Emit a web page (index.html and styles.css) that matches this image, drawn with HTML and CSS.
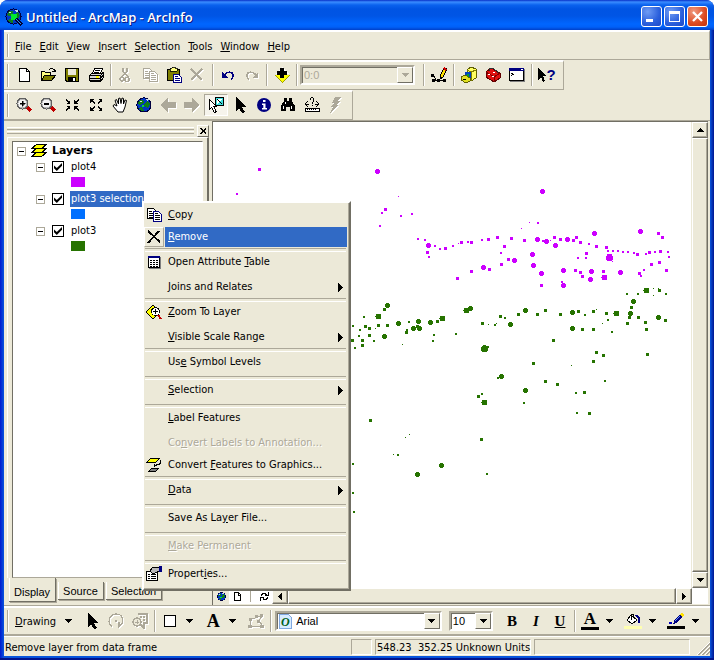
FILE: index.html
```html
<!DOCTYPE html>
<html lang="en">
<head>
<meta charset="utf-8">
<title>Untitled - ArcMap - ArcInfo</title>
<link rel="stylesheet" href="styles.css">
</head>
<body>
<svg class="defs" aria-hidden="true">
  <symbol id="globe" viewBox="0 0 16 16">
    <circle cx="8" cy="8" r="7.6" fill="#000040"/>
    <circle cx="8" cy="8" r="6.6" fill="#0038c8"/>
    <path d="M4 3h3l1 2-2 2-3 1-1-2zM9 6l3-2 2 3-2 4-3-1-1-2zM4 10l3 1 1 3-2 0-3-2z" fill="#108018"/>
    <path d="M9 2h3l1 1-2 1zM4 4h2v1H4z" fill="#c8d8e8"/>
    <path d="M6 8h2v2H6z" fill="#00e040"/>
  </symbol>
  <symbol id="pointer" viewBox="0 0 16 16"><path d="M4 0v14l3-3 3 5 3-1-3-5h4z"/></symbol>
  <symbol id="down" viewBox="0 0 7 4"><path d="M0 0h7v1H6v1H5v1H4v1H3V3H2V2H1V1H0z"/></symbol>
  <symbol id="copy" viewBox="0 0 16 16">
    <path d="M1 1h6l2 2v8H1z" fill="#fff" stroke="currentColor" transform="translate(.5 .5)"/>
    <path d="M3 4h3M3 6h5M3 8h5M3 10h4" stroke="currentColor" transform="translate(0 .5)"/>
    <path d="M7 5h5l3 3v7H7z" fill="#fff" stroke="var(--front, currentColor)" transform="translate(.5 -.5)"/>
    <path d="M9 7h3M9 9h5M9 11h5M9 13h5" stroke="currentColor" transform="translate(0 -.5)"/>
  </symbol>
  <symbol id="lens" viewBox="0 0 16 16">
    <path d="M11 10l4 4" stroke="#c00000" stroke-width="3"/>
    <circle cx="6.5" cy="6.5" r="5.5" fill="#b8b8b8" stroke="#606060"/>
    <circle cx="6.5" cy="6.5" r="4" fill="#f4f4f4"/>
  </symbol>
</svg>

<div class="window">
  <header class="title">
    <svg class="app" viewBox="0 0 18 18"><use href="#globe" width="17" height="17"/><circle cx="9" cy="9" r="3.5" fill="#00e830"/><path d="M11 11l6 6" stroke="#000030" stroke-width="3"/><path d="M11 11l5 5" stroke="#3090f0"/></svg>
    <h1>Untitled - ArcMap - ArcInfo</h1>
    <button class="cap" aria-label="Minimize"><svg viewBox="0 0 19 19"><path d="M4 12h7v3H4z" fill="#fff"/></svg></button>
    <button class="cap" aria-label="Maximize"><svg viewBox="0 0 19 19"><path d="M4 4h11v11H4zM5 7v7h9V7z" fill="#fff" fill-rule="evenodd"/></svg></button>
    <button class="cap close" aria-label="Close"><svg class="smooth" viewBox="0 0 19 19"><path d="M5 5l9 9M14 5l-9 9" stroke="#fff" stroke-width="2.3"/></svg></button>
  </header>

  <div class="client">
    <nav class="bar menubar">
      <button><u>F</u>ile</button><button><u>E</u>dit</button><button><u>V</u>iew</button><button><u>I</u>nsert</button><button><u>S</u>election</button><button><u>T</u>ools</button><button><u>W</u>indow</button><button><u>H</u>elp</button>
    </nav>

    <div class="bar tools fit">
      <button aria-label="New"><svg viewBox="0 0 16 16"><path d="M3.500 1.500h7l3 3v10h-10z" fill="#fff" stroke="#000"/><path d="M10.500 1.500v3h3" fill="none" stroke="#000"/></svg></button>
      <button aria-label="Open"><svg viewBox="0 0 16 16"><path d="M1.500 13.500v-9h3l1 1h5v3" fill="#ffff80" stroke="#000"/><path d="M1.500 13.500l3-5h11l-4 5z" fill="#808000" stroke="#000"/><path d="M9 2.500h1m0-1h3m0 1h1v2m1-2v2h-3" fill="none" stroke="#000"/></svg></button>
      <button aria-label="Save"><svg viewBox="0 0 16 16"><path d="M1 1h14v14H2l-1-1z"/><path d="M2 2h2v6h8V2h2v12H3l-1-1z" fill="#808000"/><path d="M4 2h8v6H4z" fill="#ece9d8"/><path d="M4 10h8v5H4z"/><path d="M9 11h2v3H9z" fill="#fff"/></svg></button>
      <button aria-label="Print"><svg viewBox="0 0 16 16"><path d="M4.500 6.500l2-5h8l-2 5" fill="#fff" stroke="#000"/><path d="M7 3.500h5M6 5.500h5" stroke="#000"/><path d="M1.500 8.500l2-2h10l2-1v5l-3 4h-10l-1-2z" fill="#d8d8d8" stroke="#000"/><path d="M2 8.500h10l3-2M2 11.500h10l3-3M12.500 8v6M3 13.500h9" fill="none" stroke="#000"/><path d="M8 9h3v2H8z" fill="#ffff00"/></svg></button>
      <i class="sep"></i>
      <button class="off" aria-label="Cut"><svg viewBox="0 0 16 16"><path d="M5 1v3l5 6M9 1v3l-5 6" fill="none" stroke="currentColor" stroke-width="1.500"/><circle cx="4" cy="12" r="2" fill="none" stroke="currentColor" stroke-width="1.500"/><circle cx="9" cy="12.500" r="2" fill="none" stroke="currentColor" stroke-width="1.500"/></svg></button>
      <button class="off" aria-label="Copy"><svg viewBox="0 0 16 16"><use href="#copy"/></svg></button>
      <button aria-label="Paste"><svg viewBox="0 0 16 16"><path d="M1.500 2.500h12v11h-12z" fill="#808000" stroke="#000"/><path d="M4 1h2V0h3v1h2v3H4z" fill="#ffff80" stroke="#000" stroke-width=".8"/><path d="M7.500 7.500h5l3 3v5h-8z" fill="#fff" stroke="#000080"/><path d="M9 9.500h3M9 11.500h5M9 13.500h5" stroke="#000080"/></svg></button>
      <button class="off" aria-label="Delete"><svg viewBox="0 0 16 16"><path d="M1 2l11 11M12 2L1 13" stroke="currentColor" stroke-width="1.800"/></svg></button>
      <i class="sep"></i>
      <button aria-label="Undo"><svg viewBox="0 0 16 16"><path d="M2 5v6h6z" fill="#000080"/><path d="M4 8c3-4 9-4 9 1 0 2-1 3-2 4" fill="none" stroke="#000080" stroke-width="1.500"/></svg></button>
      <button class="off" aria-label="Redo"><svg viewBox="0 0 16 16"><path d="M14 5v6H8z" fill="currentColor"/><path d="M12 8c-3-4-9-4-9 1 0 2 1 3 2 4" fill="none" stroke="currentColor" stroke-width="1.500"/></svg></button>
      <i class="sep"></i>
      <button aria-label="Add Data"><svg viewBox="0 0 16 16"><path d="M0 8h16l-8 8z" fill="#a0a000"/><path d="M1 8h14l-7 7z" fill="#ffff00"/><path d="M8 0L1 7h14z" fill="#fff"/><path d="M6 1h4v3h3v4h-3v3H6V8H3V4h3z"/></svg></button>
      <i class="sep"></i>
      <span class="combo scale"><select aria-label="Map scale" disabled><option>0:0</option></select><span class="drop"><svg viewBox="0 0 7 4"><use href="#down"/></svg></span></span>
      <i class="sep"></i>
      <button aria-label="Editor"><svg viewBox="0 0 16 16"><path d="M2 7l3 6h9M1 13h14" fill="none" stroke="#000"/><path d="M0 7h3v3H0zM1 12h3v3H1zM6 12h3v3H6zM12 12h3v3h-3z"/><path d="M9 9l4-8 3 1-4 8-3 2z" fill="#ffe000" stroke="#000"/><path d="M13 0l3 2-1 2-3-2z" fill="#d00000"/></svg></button>
      <i class="sep"></i>
      <button aria-label="ArcCatalog"><svg viewBox="0 0 16 16"><path d="M6 3l4-3 5 2v9l-5 3-4-4z" fill="#ffff60" stroke="#606000"/><path d="M10 5v9M6 3l4 2 5-2" fill="none" stroke="#808000"/><circle cx="7" cy="8" r="3.500" fill="#0040c0"/><path d="M6 7h2v3H6z" fill="#00a030"/><path d="M0 10l4-2 5 3v3l-4 2-5-3z" fill="#e0e020" stroke="#606000"/><path d="M2 12h3" stroke="#000"/></svg></button>
      <button aria-label="ArcToolbox"><svg viewBox="0 0 16 16"><path d="M1 5l5-4 9 5v5l-6 4-8-5z" fill="#e01010" stroke="#600000"/><path d="M1 5l8 5 6-4M9 10v5" fill="none" stroke="#800000"/><path d="M4 4V2l3-1 5 3v2" fill="none" stroke="#303030"/><path d="M3 7h2v1H3zM7 9h2v1H7zM8 5h2v1H8z" fill="#fff"/></svg></button>
      <button aria-label="Command Line"><svg viewBox="0 0 16 16"><path d="M1 2h15v13H1z" fill="#808080"/><path d="M0 1h15v13H0z"/><path d="M1 4h13v9H1z" fill="#fff"/><path d="M0 1h15v3H0z" fill="#000080"/><path d="M12 2h2v1h-2z" fill="#fff"/><path d="M2 6l2 1.500L2 9" fill="none" stroke="#000"/></svg></button>
      <i class="sep"></i>
      <button class="help" aria-label="What's This"><svg viewBox="0 0 8 16"><path d="M0 1v12l3-3 2 5 2-1-2-5h3z"/></svg><b>?</b></button>
    </div>

    <div class="bar tools fit short">
      <button aria-label="Zoom In"><svg viewBox="0 0 16 16"><use href="#lens"/><path d="M4 6h2V4h1v2h2v1H7v2H6V7H4z" stroke="#000" stroke-width=".5"/></svg></button>
      <button aria-label="Zoom Out"><svg viewBox="0 0 16 16"><use href="#lens"/><path d="M4 6h5v1.500H4z"/></svg></button>
      <button aria-label="Fixed Zoom In"><svg viewBox="0 0 16 16"><path d="M6 3v4H2l1.500-1.500L1 3l1-1 2.500 2.500zM10 3v4h4l-1.500-1.500L15 3l-1-1-2.500 2.500zM6 13V9H2l1.500 1.500L1 13l1 1 2.500-2.500zM10 13V9h4l-1.500 1.500L15 13l-1 1-2.500-2.500z"/></svg></button>
      <button aria-label="Fixed Zoom Out"><svg viewBox="0 0 16 16"><path d="M2 2h4L4.500 3.500 7 6 6 7 3.500 4.500 2 6zM14 2h-4l1.500 1.500L9 6l1 1 2.500-2.500L14 6zM2 14h4l-1.500-1.500L7 10 6 9l-2.500 2.500L2 10zM14 14h-4l1.500-1.500L9 10l1-1 2.500 2.500L14 10z"/></svg></button>
      <button aria-label="Pan"><svg class="smooth" viewBox="0 0 16 16"><path d="M5 9L3 3.500l1.500-1L6.500 7V1.500L8 1l1 5.500L10 1l1.500.500V7L13 3l1.500.5L13 10l-2 5H6l-5-6 1-1.500z" fill="#fff" stroke="#000"/></svg></button>
      <button aria-label="Full Extent"><svg viewBox="0 0 16 16"><use href="#globe"/></svg></button>
      <button class="off" aria-label="Previous Extent"><svg viewBox="0 0 16 16"><path d="M0 8l8-7v4h8v6H8v4z" fill="currentColor"/></svg></button>
      <button class="off" aria-label="Next Extent"><svg viewBox="0 0 16 16"><path d="M16 8L8 1v4H0v6h8v4z" fill="currentColor"/></svg></button>
      <button class="on" aria-label="Select Features"><svg viewBox="0 0 16 16"><path d="M7.500.5h8v8h-8z" fill="#40e0e0" stroke="#000"/><path d="M9 2h5l-5 5z" fill="#fff"/><path d="M9 2l5 5" stroke="#000"/><path d="M1.500 2.500v10l2-2 3 5 2-1-3-5h3z" fill="#fff" stroke="#000"/></svg></button>
      <button aria-label="Select Elements"><svg viewBox="0 0 16 16"><use href="#pointer"/></svg></button>
      <button aria-label="Identify"><svg class="smooth" viewBox="0 0 16 16"><circle cx="8" cy="8" r="7" fill="#000080"/><path d="M7 3h2.500v2H7zM6 6.500h3.500V11H11v1.500H6V11h1.300V8H6z" fill="#fff"/></svg></button>
      <button aria-label="Find"><svg viewBox="0 0 16 16"><path d="M4 1h3v3h2V1h3v3l3 5v5h-5v-4H6v4H1V9l3-5z"/><path d="M3.500 9v3M11.500 9v3M5.500 5v2" stroke="#fff"/></svg></button>
      <button aria-label="Measure"><svg viewBox="0 0 16 16"><path d="M4 4L1 7l3 3M1 7h4M12 4l3 3-3 3M15 7h-4M6 3c0-3 4-3 4 0 0 2-2 2-2 4M8 8v1" fill="none" stroke="#000"/><path d="M1 11.500h14v3H1z" fill="#fff" stroke="#000"/><path d="M3.500 12v1M5.500 12v1M7.500 12v1M9.500 12v1M11.500 12v1" stroke="#000"/></svg></button>
      <button class="off" aria-label="Hyperlink"><svg viewBox="0 0 16 16"><path d="M7 0h6l-3 4h2l-4 4h2l-8 8 3-6H3l3-4H4z" fill="currentColor"/></svg></button>
    </div>

    <main class="work">
      <aside class="dock">
        <div class="grip"><span class="rails"></span><button aria-label="Close panel"><svg viewBox="0 0 8 7"><path d="M0 0h2l2 2 2-2h2L5 3.500 8 7H6L4 5 2 7H0l3-3.500z"/></svg></button></div>
        <div class="frame">
          <ul class="tree">
            <li class="root"><button class="fold" aria-label="Collapse Layers"></button><svg class="stack" viewBox="0 0 16 14"><path d="M5.500 8.500h10l-5 4H.5z" fill="#ffff00" stroke="#000"/><path d="M5.500 4.500h10l-5 4H.5z" fill="#ffff00" stroke="#000"/><path d="M5.500.5h10l-5 4H.5z" fill="#ffff00" stroke="#000"/></svg><b>Layers</b></li>
            <li><button class="fold" aria-label="Collapse plot4"></button><label><input type="checkbox" checked><span>plot4</span></label></li>
            <li class="key violet"></li>
            <li><button class="fold" aria-label="Collapse plot3 selection"></button><label><input type="checkbox" checked><span class="picked">plot3 selection</span></label></li>
            <li class="key blue"></li>
            <li><button class="fold" aria-label="Collapse plot3"></button><label><input type="checkbox" checked><span>plot3</span></label></li>
            <li class="key green"></li>
          </ul>
        </div>
        <div class="tabs"><button class="front">Display</button><button>Source</button><button>Selection</button></div>
      </aside>

      <section class="view">
        <div class="map">
          <svg class="points" aria-label="Map">
            <g class="sites" transform="translate(-212.500 -121.500)">
              <g class="p4">
                <path class="s1" d="M458 243h0M529 222h0M521 228h0M550 240h0M612 261h0M398 196h0"/>
                <path class="s2" d="M236 193h0M381 212h0M400 215h0M411 213h0M379 225h0M417 238h0M424 239h0M434 245h0M439 248h0M452 245h0M467 241h0M481 239h0M500 252h0M428 256h0M537 222h0M542 240h0M588 243h0M607 250h0M612 250h0M617 250h0M622 251h0M627 251h0M633 252h0M645 253h0M654 251h0M667 251h0M668 256h0M585 257h0M577 257h0M640 275h0M643 269h0M561 281h0"/>
                <path class="s3" d="M259 169h0M385 209h0M445 248h0M461 242h0M471 242h0M488 239h0M497 237h0M504 246h0M511 238h0M427 252h0M508 259h0M501 264h0M489 269h0M471 271h0M457 278h0M524 240h0M554 237h0M560 239h0M573 240h0M576 237h0M580 242h0M596 246h0M606 247h0M637 254h0M649 252h0M660 251h0M658 233h0M662 237h0M586 253h0M575 270h0M580 272h0M582 276h0M603 271h0M639 273h0M651 264h0M659 262h0M666 270h0M541 285h0"/>
                <path class="s4" d="M377 171h0M428 245h0M514 260h0M483 267h0M537 239h0M532 254h0M533 265h0M542 191h0M546 241h0M555 245h0M567 239h0M594 233h0M640 231h0M563 270h0M591 271h0M590 279h0M620 272h0M541 273h0M563 285h0"/>
                <path class="s5" d="M604 277h0"/><path class="s6" d="M609 257h0"/>
              </g>
              <g class="p3">
                <path class="s1" d="M375 328h0M402 344h0M488 324h0M496 323h0M596 309h0M602 323h0M653 288h0M653 295h0M658 288h0M409 434h0M405 437h0M393 454h0M571 365h0"/>
                <path class="s2" d="M363 316h0M352 325h0M359 329h0M408 321h0M406 329h0M358 335h0M373 340h0M354 347h0M433 334h0M432 340h0M455 333h0M494 324h0M504 317h0M584 314h0M607 319h0M626 293h0M637 293h0M665 293h0M611 331h0M487 346h0M497 377h0M481 393h0M482 400h0M523 402h0M397 454h0M352 463h0M486 473h0M352 492h0M353 511h0M604 380h0M575 392h0M576 412h0"/>
                <path class="s3" d="M384 309h0M365 326h0M369 328h0M378 325h0M387 325h0M417 326h0M406 332h0M437 321h0M369 335h0M362 340h0M352 340h0M362 345h0M482 323h0M500 316h0M518 314h0M537 314h0M545 310h0M560 314h0M578 311h0M593 311h0M606 313h0M631 307h0M629 317h0M627 323h0M638 317h0M645 322h0M646 329h0M665 320h0M659 290h0M582 329h0M593 329h0M553 340h0M478 396h0M481 439h0M533 363h0M370 420h0M596 352h0M603 355h0M593 361h0M647 354h0M545 381h0M557 384h0M584 392h0M589 413h0"/>
                <path class="s4" d="M387 305h0M398 323h0M418 321h0M413 328h0M419 328h0M430 322h0M470 308h0M384 336h0M510 324h0M525 310h0M572 312h0M630 313h0M633 301h0M658 317h0M572 328h0M501 376h0M525 390h0M441 465h0M417 474h0"/>
                <path class="s5" d="M378 316h0M442 318h0M466 310h0M616 313h0M646 290h0M484 402h0"/><path class="s6" d="M484 348h0"/>
              </g>
            </g>
          </svg>
        </div>
        <div class="vscroll"><button aria-label="Scroll up"><svg class="flip" viewBox="0 0 7 4"><use href="#down"/></svg></button><span class="thumb"></span><button aria-label="Scroll down"><svg viewBox="0 0 7 4"><use href="#down"/></svg></button></div>
        <div class="hscroll">
          <button class="mode on" aria-label="Data View"><svg class="mini" viewBox="0 0 16 16"><use href="#globe"/></svg></button>
          <button class="mode" aria-label="Layout View"><svg class="mini" viewBox="0 0 9 9"><path d="M1.500.5h4l2 2v6h-6z" fill="#fff" stroke="#000"/><path d="M5.500 1v2h2" fill="none" stroke="#000"/></svg></button>
          <i></i>
          <button class="mode" aria-label="Refresh"><svg class="mini" viewBox="0 0 9 9"><path d="M1.500 4V2.500h1v-1h3v1h1v1M8.500 0v4M8 3.500H5M7.500 5v1.500h-1v1h-3v-1h-1M.5 9V5M1 5.500h3" fill="none" stroke="#000"/></svg></button>
          <button aria-label="Scroll left"><svg class="side" viewBox="0 0 4 7"><path d="M4 0v7H3V6H2V5H1V4H0V3h1V2h1V1h1V0z"/></svg></button><span class="thumb"></span><button aria-label="Scroll right"><svg class="side" viewBox="0 0 4 7"><path d="M0 0v7h1V6h1V5h1V4h1V3H3V2H2V1H1V0z"/></svg></button>
        </div>
        <span class="corner"></span>
      </section>
    </main>

    <div class="bar tools draw">
      <button class="word"><u>D</u>rawing</button><button class="arrow" aria-label="Drawing menu"><svg viewBox="0 0 7 4"><use href="#down"/></svg></button>
      <button aria-label="Select Elements"><svg viewBox="0 0 16 16"><use href="#pointer"/></svg></button>
      <button class="off" aria-label="Rotate"><svg viewBox="0 0 16 16"><path d="M4 14C-1 10 1 1 8 1c8 0 8 9 4 12M15 10l-4 4v-5" fill="none" stroke="currentColor" stroke-width="1.300"/><path d="M7 7h2v2H7z" fill="currentColor"/></svg></button>
      <button class="off" aria-label="Zoom to Selected"><svg viewBox="0 0 16 16"><path d="M6 1h9v9h-3v5l-3-3" fill="none" stroke="currentColor" stroke-width="1.500"/><path d="M8 3h2v2H8zM11 3h2v2h-2zM11 6h2v2h-2z" fill="currentColor"/><circle cx="5" cy="9" r="4" fill="#ece9d8" stroke="currentColor" stroke-width="1.500"/><path d="M3 9h4M5 7v4" stroke="currentColor"/></svg></button>
      <i class="sep"></i>
      <button aria-label="Rectangle"><svg viewBox="0 0 16 16"><path d="M2.500 2.500h11v11h-11z" fill="#fff" stroke="#000"/></svg></button><button class="arrow" aria-label="Shapes"><svg viewBox="0 0 7 4"><use href="#down"/></svg></button>
      <button class="serif big">A</button><button class="arrow" aria-label="Text tools"><svg viewBox="0 0 7 4"><use href="#down"/></svg></button>
      <button class="off" aria-label="Edit Vertices"><svg viewBox="0 0 16 16"><path d="M2 13V6l5-1 2-2h5l-3 5 4 5z" fill="none" stroke="currentColor"/><path d="M0 12h4v3H0zM1 5h3v3H1zM7 2h3v3H7zM12 1h3v3h-3zM9 7h3v3H9zM12 12h4v3h-4z" fill="currentColor"/></svg></button>
      <i class="sep"></i>
      <span class="combo face"><svg viewBox="0 0 14 16"><path d="M1 1h9l3 3v11H1z" fill="#d8ecff" stroke="#80a8e0"/><text x="3" y="13" class="otf">O</text></svg><select aria-label="Font"><option>Arial</option></select><span class="drop"><svg viewBox="0 0 7 4"><use href="#down"/></svg></span></span>
      <span class="combo size"><select aria-label="Font size"><option>10</option></select><span class="drop"><svg viewBox="0 0 7 4"><use href="#down"/></svg></span></span>
      <button class="serif">B</button><button class="serif slant">I</button><button class="serif under">U</button>
      <i class="sep"></i>
      <button class="serif tint">A</button><button class="arrow" aria-label="Font color"><svg viewBox="0 0 7 4"><use href="#down"/></svg></button>
      <button class="tint pale" aria-label="Fill Color"><svg viewBox="0 0 16 12"><path d="M6 2l6 5-5 4-5-4z" fill="#fff" stroke="#000"/><path d="M6 7V1h2v3" fill="none" stroke="#000"/><path d="M10 2h3l2 3v5h-2V6z" fill="#000080"/></svg></button><button class="arrow" aria-label="Fill colors"><svg viewBox="0 0 7 4"><use href="#down"/></svg></button>
      <button class="tint" aria-label="Line Color"><svg viewBox="0 0 16 12"><path d="M1 9h3v2H1z" fill="#0000c0"/><path d="M5 11l2-5 5-4 2 2-5 6z" fill="#000080"/><path d="M7 8l5-5" stroke="#6090ff"/><path d="M12 1l2-1 2 2-2 2z" fill="#ffe000"/></svg></button><button class="arrow" aria-label="Line colors"><svg viewBox="0 0 7 4"><use href="#down"/></svg></button>
    </div>

    <footer class="status">
      <span class="hint">Remove layer from data frame</span><span class="pane tiny"></span><span class="pane coords">548.23&nbsp; 352.25 Unknown Units</span><span class="pane"></span>
      <svg class="sizer" viewBox="0 0 14 14"><path d="M2 14L14 2M6 14l8-8M10 14l4-4" stroke="#aca899" stroke-width="2"/><path d="M1 14L14 1M5 14l9-9M9 14l5-5" stroke="#fff"/></svg>
    </footer>
  </div>

  <menu class="popup">
    <li><button><span class="ico"><svg style="--front:#000080" viewBox="0 0 16 16"><use href="#copy"/></svg></span><span class="txt"><u>C</u>opy</span></button></li>
    <li><button class="hot"><span class="ico"><svg viewBox="0 0 16 16"><path d="M2 2l12 11M13 2L2 14" stroke="#000" stroke-width="1.800"/></svg></span><span class="txt"><u>R</u>emove</span></button></li>
    <li class="rule"></li>
    <li><button><span class="ico"><svg viewBox="0 0 16 16"><path d="M3 3h12v12H3z" fill="#808080"/><path d="M2.500 2.500h11v11h-11z" fill="#fff" stroke="#000"/><path d="M2 2h12v2H2z" fill="#000080"/><path d="M4 6.500h8M4 8.500h8M4 10.500h8M4 12.500h8" stroke="#000" stroke-dasharray="2 1"/></svg></span><span class="txt">Open Attribute <u>T</u>able</span></button></li>
    <li class="loose"><button><span class="ico"></span><span class="txt"><u>J</u>oins and Relates</span><svg class="more" viewBox="0 0 5 9"><path d="M0 0l5 4.500L0 9z"/></svg></button></li>
    <li class="rule"></li>
    <li><button><span class="ico"><svg viewBox="0 0 16 16"><path d="M7 1l7 7-7 7-7-7z" fill="#ffff00" stroke="#000"/><path d="M12 11l3 4" stroke="#c00000" stroke-width="2"/><circle cx="9.500" cy="7.500" r="4" fill="#fff" stroke="#000"/><path d="M7 7.500h5M9.500 5v5" stroke="#000"/></svg></span><span class="txt"><u>Z</u>oom To Layer</span></button></li>
    <li class="loose"><button><span class="ico"></span><span class="txt"><u>V</u>isible Scale Range</span><svg class="more" viewBox="0 0 5 9"><path d="M0 0l5 4.500L0 9z"/></svg></button></li>
    <li class="rule"></li>
    <li><button><span class="ico"></span><span class="txt">Us<u>e</u> Symbol Levels</span></button></li>
    <li class="rule wide"></li>
    <li><button><span class="ico"></span><span class="txt"><u>S</u>election</span><svg class="more" viewBox="0 0 5 9"><path d="M0 0l5 4.500L0 9z"/></svg></button></li>
    <li class="rule wide"></li>
    <li><button><span class="ico"></span><span class="txt"><u>L</u>abel Features</span></button></li>
    <li class="loose"><button disabled><span class="ico"></span><span class="txt">Co<u>n</u>vert Labels to Annotation...</span></button></li>
    <li><button><span class="ico"><svg viewBox="0 0 16 16"><path d="M4.500 1.500h9l-4 4h-9z" fill="#ffff00" stroke="#000"/><path d="M5.500 11.500h7l-3 3h-7z" fill="#808080" stroke="#000"/><path d="M13.500 3.500h1v3h-1v1h-3v1h-2M8.500 7v3" fill="none" stroke="#000"/></svg></span><span class="txt">Convert <u>F</u>eatures to Graphics...</span></button></li>
    <li class="rule"></li>
    <li><button><span class="ico"></span><span class="txt"><u>D</u>ata</span><svg class="more" viewBox="0 0 5 9"><path d="M0 0l5 4.500L0 9z"/></svg></button></li>
    <li class="rule wide"></li>
    <li><button><span class="ico"></span><span class="txt">Save As La<u>y</u>er File...</span></button></li>
    <li class="rule wide"></li>
    <li><button disabled><span class="ico"></span><span class="txt"><u>M</u>ake Permanent</span></button></li>
    <li class="rule wide"></li>
    <li><button><span class="ico"><svg viewBox="0 0 16 16"><path d="M.5 5.500h11v9H.5z" fill="#fff" stroke="#000"/><path d="M2 8.500h2M5 8.500h5M2 10.500h2M5 10.500h5M2 12.500h2M5 12.500h5" stroke="#000"/><path d="M4 5l3-4h6v4l-4 2-2 1z" fill="#b8b8b8" stroke="#000"/><path d="M13 0h3v6h-3z" fill="#000080"/></svg></span><span class="txt">Propert<u>i</u>es...</span></button></li>
  </menu>
</div>
</body>
</html>
```
FILE: styles.css
```css
:root {
  --face: #ece9d8;
  --shade: #aca899;
  --dark: #716f64;
  --pick: #316ac5;
  --ui: "DejaVu Sans Condensed", "Noto Sans", sans-serif;
}

* { box-sizing: border-box; }

body {
  margin: 0;
  background: #fff;
  color: #000;
  font: 11px/14px var(--ui);
}

button {
  margin: 0;
  padding: 0;
  border: 0;
  background: none;
  color: inherit;
  font: inherit;
}

svg { display: block; flex: none; shape-rendering: crispEdges; }
svg.smooth { shape-rendering: auto; }
ul, menu { margin: 0; padding: 0; list-style: none; }
.defs { position: absolute; width: 0; height: 0; }

.window {
  position: relative;
  display: flex;
  flex-direction: column;
  min-height: 100vh;
  padding: 0 4px 4px;
  border-radius: 8px 8px 0 0;
  background: linear-gradient(90deg, #0019cf, #0855dd 4px, #0855dd calc(100% - 4px), #001590);
  box-shadow: inset 0 -2px #00138c;
}

/* Title bar */
.title {
  display: flex;
  align-items: center;
  gap: 2px;
  height: 30px;
  margin: 0 -4px;
  padding: 3px 6px 0 5px;
  border-radius: 8px 8px 0 0;
  background: linear-gradient(#0831c8 0, #3a8cff 2px, #0a62ee 5px, #0054e3 9px, #0055e5 16px, #0066ff 24px, #0060f8 27px, #0040c8 30px);
}
.title h1 {
  flex: 1;
  margin: 0 0 0 1px;
  color: #fff;
  font: 600 13px/18px "Open Sans", "Noto Sans", sans-serif;
  text-shadow: 1px 1px #0a1883;
}
.app { width: 18px; height: 18px; }
.cap {
  width: 21px;
  height: 21px;
  border: 1px solid #fff;
  border-radius: 3px;
  background: radial-gradient(circle at 30% 25%, #6f9cf4, #2a5fdc 60%, #1c49c8);
}
.cap.close { background: radial-gradient(circle at 30% 25%, #f09a80, #dc4a20 60%, #c03410); }

.client { display: flex; flex: 1; flex-direction: column; background: var(--face); }

/* Toolbars */
.bar {
  position: relative;
  display: flex;
  align-items: center;
  height: 30px;
  padding: 0 3px 0 8px;
  border-top: 2px solid #fff;
  border-right: 1px solid var(--shade);
  border-bottom: 1px solid var(--shade);
}
.bar::before {
  content: "";
  position: absolute;
  left: 0;
  top: 2px;
  bottom: 2px;
  width: 3px;
  border: solid var(--shade);
  border-width: 0 1px 0 0;
  box-shadow: 1px 0 #fff;
}
.fit { align-self: flex-start; padding-right: 4px; padding-bottom: 2px; }
.menubar { padding: 2px 3px 0 7px; }
.menubar button { padding: 0 4px; }
.tools button {
  display: flex;
  flex: none;
  align-items: center;
  justify-content: center;
  width: 24px;
  height: 22px;
}
.tools button > svg { width: 16px; height: 16px; }
.tools .off { color: var(--shade); filter: drop-shadow(1px 1px #fff); }
.tools .on {
  border: 1px solid;
  border-color: var(--shade) #fff #fff var(--shade);
  background: #f6f4ec;
}
.sep {
  width: 2px;
  height: 22px;
  flex: none;
  margin: 0 2px;
  border-left: 1px solid var(--shade);
  border-right: 1px solid #fff;
}
.tools .help > svg { width: 8px; }
.help b { color: #000080; font: bold 15px/16px "Liberation Sans", sans-serif; }

.combo {
  display: flex;
  height: 20px;
  align-items: center;
  border: 2px solid;
  border-color: var(--shade) #fff #fff var(--shade);
  outline: 1px solid var(--face);
  background: #fff;
  box-shadow: inset 1px 1px var(--dark);
}
.combo select {
  flex: 1;
  min-width: 0;
  height: 16px;
  padding: 0 2px;
  appearance: none;
  border: 0;
  background: none;
  color: #000;
  font: 11px/16px "Liberation Sans", sans-serif;
}
.combo select:disabled { color: var(--shade); opacity: 1; }
.drop {
  display: flex;
  align-items: center;
  justify-content: center;
  width: 16px;
  height: 16px;
  border: 1px solid;
  border-color: #fff var(--dark) var(--dark) #fff;
  background: var(--face);
}
.drop svg, .arrow svg, .vscroll svg { width: 7px; height: 4px; }
.scale { width: 115px; margin-right: 6px; background: var(--face); }
.scale .drop { fill: var(--shade); }
.face { width: 170px; margin: 0 7px 0 1px; }
.face > svg { width: 14px; height: 16px; margin-left: 1px; }
.face select { padding-left: 4px; }
.size { width: 45px; margin-right: 7px; }
.otf { fill: #006020; font: italic bold 12px "Liberation Serif", serif; }

/* Workspace */
.work { display: flex; flex: 1; border-top: 1px solid var(--shade); }
.dock {
  display: flex;
  width: 208px;
  flex: none;
  flex-direction: column;
  padding: 3px 3px 4px;
}
.grip { display: flex; align-items: center; gap: 3px; height: 13px; }
.rails {
  flex: 1;
  height: 7px;
  border: solid;
  border-width: 1px 0;
  border-color: #fff var(--shade) var(--shade);
  background: linear-gradient(var(--face) 1px, var(--shade) 1px, var(--shade) 2px, var(--face) 2px, var(--face) 3px, #fff 3px, #fff 4px, var(--face) 4px);
}
.grip button {
  display: flex;
  align-items: center;
  justify-content: center;
  width: 12px;
  height: 12px;
  border: 1px solid;
  border-color: #fff var(--dark) var(--dark) #fff;
}
.grip button svg { width: 7px; height: 6px; }
.frame {
  display: flex;
  flex: 1;
  padding: 3px 4px 0;
  border: solid;
  border-width: 1px 2px 0 1px;
  border-color: #fff var(--dark) #fff #fff;
}
.tree {
  flex: 1;
  padding-top: 1px;
  border: 1px solid;
  border-color: var(--dark) #fff var(--shade) var(--dark);
  background: #fff;
}
.tree li { display: flex; align-items: center; height: 16px; padding-left: 23px; }
.tree .root { gap: 5px; padding-left: 4px; }
.root b { font: bold 11px/14px "DejaVu Sans", sans-serif; }
.stack { width: 16px; height: 14px; }
.fold {
  width: 9px;
  height: 9px;
  border: 1px solid var(--shade);
  background: linear-gradient(#000, #000) center / 5px 1px no-repeat;
}
.tree label { display: flex; align-items: center; gap: 6px; padding-left: 7px; }
.tree input {
  width: 12px;
  height: 12px;
  margin: 0;
  appearance: none;
  border: 1px solid #000;
}
.tree input:checked::after {
  content: "";
  display: block;
  width: 8px;
  height: 8px;
  margin: 1px;
  background: #000;
  clip-path: polygon(0 30%, 35% 62%, 100% 0, 100% 35%, 35% 100%, 0 65%);
}
.tree label span { padding: 1px 0 1px 1px; }
.tree .picked { background: var(--pick); color: #fff; }
.tree .key::before { content: ""; width: 14px; height: 10px; margin: 0 0 2px 35px; }
.violet::before { background: #c0f; }
.blue::before { background: #0070ff; }
.green::before { background: #267300; }
.tabs { display: flex; align-items: flex-start; height: 24px; padding-left: 2px; }
.tabs button {
  height: 18px;
  margin: 4px 2px 0 0;
  padding: 0 5px;
  border: solid var(--dark);
  border-width: 0 1px 1px 0;
  box-shadow: 1px 1px var(--shade), inset 1px 0 #fff;
  font: 11px/16px "Liberation Sans", sans-serif;
}
.tabs .front { height: 24px; margin-top: 0; padding-top: 5px; }

.view {
  display: grid;
  flex: 1;
  grid-template: 1fr 18px / 1fr 16px;
  margin-right: 2px;
  border-left: 1px solid var(--dark);
  border-top: 1px solid var(--dark);
  background: #fff;
}
.map { position: relative; border-right: 1px solid var(--face); overflow: hidden; }
.points { position: absolute; inset: 0; width: 100%; height: 100%; }
.sites { fill: none; stroke-linecap: round; }
.p4 { stroke: #c0f; }
.p3 { stroke: #267300; }
.s1, .s2, .s3 { stroke-linecap: square; }
.s1 { stroke-width: 1px; }
.s2 { stroke-width: 2px; }
.s3 { stroke-width: 3px; }
.s4 { stroke-width: 5px; }
.s5 { stroke-width: 6px; }
.s6 { stroke-width: 7px; }
.vscroll { display: flex; flex-direction: column; }
.hscroll { display: flex; padding-bottom: 2px; background: linear-gradient(#fff 16px, var(--face) 16px); }
.corner { background: linear-gradient(#fff 16px, var(--face) 16px); }
.vscroll button, .hscroll button, .thumb {
  display: flex;
  align-items: center;
  justify-content: center;
  width: 16px;
  height: 16px;
  border: 1px solid;
  border-color: #fff var(--dark) var(--dark) #fff;
  background: var(--face);
  box-shadow: inset -1px -1px var(--shade);
}
.thumb, .vscroll .thumb, .hscroll .thumb { flex: 1; }
.flip { transform: scaleY(-1); }
.side { width: 4px; height: 7px; }
.hscroll .mode { border: 0; background: #fff; box-shadow: none; }
.hscroll .on { background: var(--face); }
.hscroll i { width: 1px; margin: 2px 5px; background: var(--shade); }
.mini { width: 9px; height: 9px; }

/* Drawing toolbar */
.draw { padding-left: 6px; border-right: 0; border-bottom: 2px solid var(--shade); box-shadow: 0 -1px var(--shade); }
.tools .word { width: auto; padding: 2px 5px 0; }
.tools .arrow { width: 15px; margin-right: 4px; }
.tools .arrow > svg { width: 7px; height: 4px; }
.tools .serif { font: bold 15px/18px "Liberation Serif", serif; }
.tools .big { font-size: 18px; }
.tools .slant { font-style: italic; }
.tools .under { text-decoration: underline; }
.tools .tint { flex-direction: column; gap: 1px; font-size: 17px; line-height: 14px; }
.tools .tint > svg { height: 12px; }
.tint::after { content: ""; width: 18px; height: 3px; background: #000; }
.pale::after { background: #ffffb0; }

/* Status bar */
.status { display: flex; height: 20px; align-items: center; gap: 3px; padding: 2px 0 1px 1px; border-top: 1px solid #fff; }
.hint { flex: 1; padding-top: 2px; }
.pane {
  width: 156px;
  height: 16px;
  border: 1px solid;
  border-color: var(--shade) #fff #fff var(--shade);
  line-height: 15px;
  padding-left: 1px;
  white-space: nowrap;
}
.tiny { width: 21px; }
.sizer { width: 14px; height: 14px; align-self: flex-end; margin-left: 3px; }

/* Layer context menu */
.popup {
  position: absolute;
  left: 142px;
  top: 201px;
  width: 209px;
  padding: 1px 2px 4px 0;
  border: 2px solid;
  border-color: #fff var(--dark) var(--dark) #fff;
  background: var(--face);
  box-shadow: inset -1px -1px var(--shade);
}
.popup button { display: flex; width: 100%; height: 22px; align-items: center; text-align: left; }
.popup .loose { margin-top: 3px; }
.ico { display: flex; width: 20px; height: 20px; flex: none; align-items: center; justify-content: center; }
.ico svg { width: 16px; height: 16px; }
.txt { flex: 1; padding: 0 0 0 4px; line-height: 20px; white-space: nowrap; }
.hot .ico { border: 1px solid; border-color: #fff var(--shade) var(--shade) #fff; }
.hot .txt { margin-left: 1px; padding-left: 3px; background: var(--pick); color: #fff; }
.popup button:disabled { color: var(--shade); text-shadow: 1px 1px #fff; }
.more { width: 5px; height: 9px; margin-right: 4px; }
.rule { height: 3px; margin: 0 1px; }
.rule::before { content: ""; display: block; height: 2px; border-top: 1px solid var(--shade); border-bottom: 1px solid #fff; }
.wide { height: 6px; padding-top: 3px; }
```
